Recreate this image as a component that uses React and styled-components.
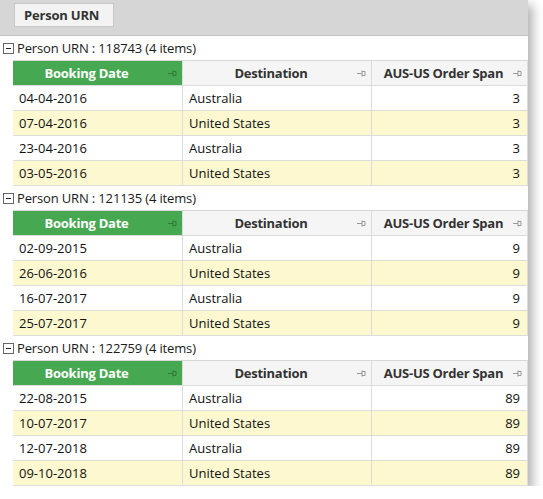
import styled, { createGlobalStyle } from 'styled-components';

const GlobalStyle = createGlobalStyle`
  body {
    margin: 0;
    background: #ffffff;
    font-family: 'Open Sans', 'Noto Sans', sans-serif;
  }
`;

const groups = [
  {
    urn: '118743',
    rows: [
      ['04-04-2016', 'Australia', 3],
      ['07-04-2016', 'United States', 3],
      ['23-04-2016', 'Australia', 3],
      ['03-05-2016', 'United States', 3],
    ],
  },
  {
    urn: '121135',
    rows: [
      ['02-09-2015', 'Australia', 9],
      ['26-06-2016', 'United States', 9],
      ['16-07-2017', 'Australia', 9],
      ['25-07-2017', 'United States', 9],
    ],
  },
  {
    urn: '122759',
    rows: [
      ['22-08-2015', 'Australia', 89],
      ['10-07-2017', 'United States', 89],
      ['12-07-2018', 'Australia', 89],
      ['09-10-2018', 'United States', 89],
    ],
  },
];

function PinIcon({ color }) {
  return (
    <svg width="9" height="7" viewBox="0 0 9 7">
      <path d="M0 3.5H5M5 0.5V6.5M5 1.5H8M5 5.5H8M8 1.5V5.5" stroke={color} strokeWidth="1" fill="none" />
    </svg>
  );
}

function App() {
  return (
    <>
      <GlobalStyle />
      <Panel>
        <GroupBar>
          <GroupChip>Person URN</GroupChip>
        </GroupBar>
        {groups.map((g) => (
          <Group key={g.urn}>
            <GroupHeader>
              <Toggle />
              Person URN : {g.urn} (4 items)
            </GroupHeader>
            <Table>
              <HeadCell $active>
                <span>Booking Date</span>
                <Pin>
                  <PinIcon color="#2e7a36" />
                </Pin>
              </HeadCell>
              <HeadCell>
                <span>Destination</span>
                <Pin>
                  <PinIcon color="#999" />
                </Pin>
              </HeadCell>
              <HeadCell>
                <span>AUS-US Order Span</span>
                <Pin>
                  <PinIcon color="#999" />
                </Pin>
              </HeadCell>
              {g.rows.map((r, i) => (
                <Row key={i} $alt={i % 2 === 1}>
                  <Cell>{r[0]}</Cell>
                  <Cell>{r[1]}</Cell>
                  <Cell $right>{r[2]}</Cell>
                </Row>
              ))}
            </Table>
          </Group>
        ))}
      </Panel>
    </>
  );
}

const Panel = styled.div`
  width: 528px;
  background: #fff;
  box-shadow: 5px 5px 10px rgba(0, 0, 0, 0.3);
`;

const GroupBar = styled.div`
  height: 36px;
  background: #d6d6d6;
  border-bottom: 1px solid #c4c4c4;
  box-sizing: border-box;
  padding: 3px 0 0 14px;
`;

const GroupChip = styled.div`
  width: 100px;
  height: 24px;
  box-sizing: border-box;
  background: #f3f3f3;
  border: 1px solid #c8c8c8;
  font-size: 13px;
  font-weight: 700;
  letter-spacing: -0.2px;
  color: #333;
  display: flex;
  align-items: center;
  padding-left: 9px;
`;

const Group = styled.div`
  display: flex;
  flex-direction: column;
`;

const GroupHeader = styled.div`
  height: 24px;
  display: flex;
  align-items: center;
  gap: 3px;
  padding-left: 3px;
  font-size: 13px;
  letter-spacing: -0.15px;
  color: #1a1a1a;
`;

const Toggle = styled.span`
  width: 9px;
  height: 9px;
  border: 1px solid #666;
  position: relative;
  &::after {
    content: '';
    position: absolute;
    left: 2px;
    right: 2px;
    top: 4px;
    height: 1px;
    background: #222;
  }
`;

const Table = styled.div`
  margin-left: 13px;
  display: grid;
  grid-template-columns: 170px 189px 156px;
  border-top: 1px solid #d8d8d8;
`;

const HeadCell = styled.div`
  height: 25px;
  box-sizing: border-box;
  position: relative;
  display: flex;
  align-items: center;
  justify-content: center;
  padding-right: ${(p) => (p.$active ? '22px' : '12px')};
  font-size: 13px;
  font-weight: 700;
  letter-spacing: -0.25px;
  background: ${(p) => (p.$active ? '#46a851' : '#f5f5f5')};
  color: ${(p) => (p.$active ? '#fff' : '#333')};
  border-right: 1px solid #dcdcdc;
  border-bottom: 1px solid #dcdcdc;
`;

const Pin = styled.span`
  position: absolute;
  right: 5px;
  top: 9px;
  display: flex;
`;

const Row = styled.div`
  display: contents;
  & > div {
    background: ${(p) => (p.$alt ? '#fdf8cf' : '#fff')};
  }
`;

const Cell = styled.div`
  height: 25px;
  box-sizing: border-box;
  display: flex;
  align-items: center;
  justify-content: ${(p) => (p.$right ? 'flex-end' : 'flex-start')};
  padding: 0 ${(p) => (p.$right ? '7px' : '6px')};
  font-size: 13px;
  color: #111;
  border-right: 1px solid #dcdcdc;
  border-bottom: 1px solid #dcdcdc;
`;

export default App;
